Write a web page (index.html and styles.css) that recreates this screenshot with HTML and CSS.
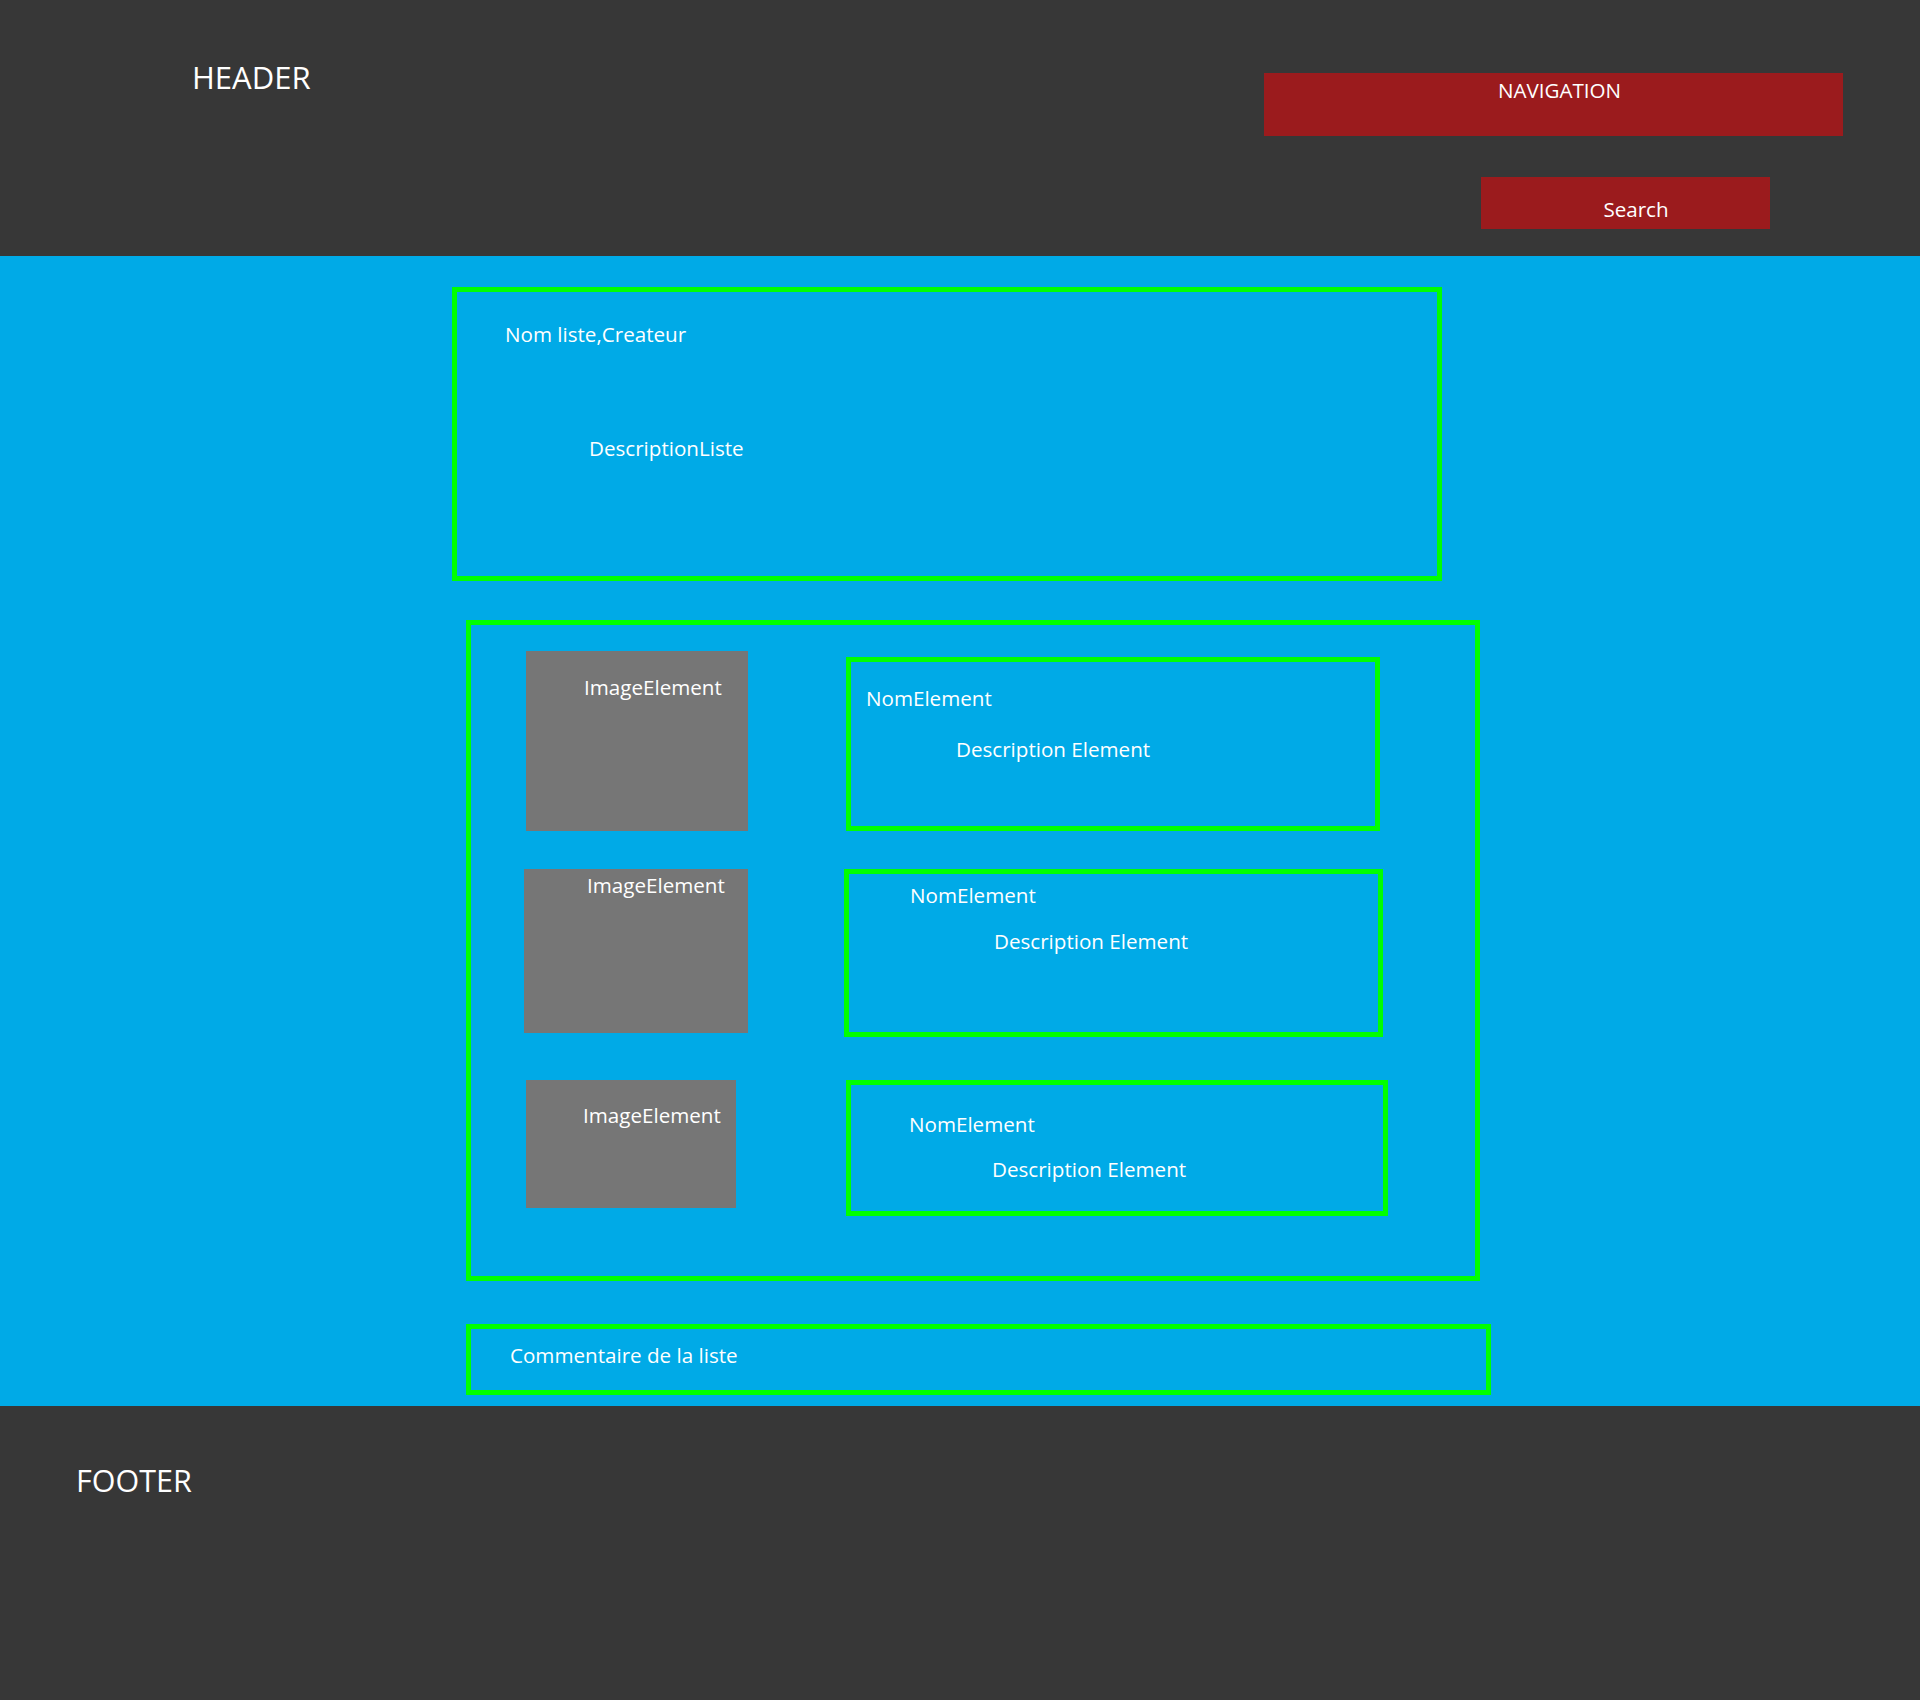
FILE: index.html
```html
<!DOCTYPE html>
<html lang="fr">
<head>
<meta charset="utf-8">
<title>Liste</title>
<link rel="stylesheet" href="styles.css">
</head>
<body>
<header class="site-header">
  <div class="site-title">HEADER</div>
  <div class="header-right">
    <nav class="nav-bar">NAVIGATION</nav>
    <div class="search-box">Search</div>
  </div>
</header>
<main class="content">
  <section class="list-info">
    <div class="list-title">Nom liste,Createur</div>
    <div class="list-desc">DescriptionListe</div>
  </section>
  <section class="elements">
    <div class="row row-1">
      <div class="image"><span class="label">ImageElement</span></div>
      <div class="elem">
        <div class="elem-name">NomElement</div>
        <div class="elem-desc">Description Element</div>
      </div>
    </div>
    <div class="row row-2">
      <div class="image"><span class="label">ImageElement</span></div>
      <div class="elem">
        <div class="elem-name">NomElement</div>
        <div class="elem-desc">Description Element</div>
      </div>
    </div>
    <div class="row row-3">
      <div class="image"><span class="label">ImageElement</span></div>
      <div class="elem">
        <div class="elem-name">NomElement</div>
        <div class="elem-desc">Description Element</div>
      </div>
    </div>
  </section>
  <section class="comments">Commentaire de la liste</section>
</main>
<footer class="site-footer">
  <div class="footer-title">FOOTER</div>
</footer>
</body>
</html>
```
FILE: styles.css
```css
* { box-sizing: border-box; }
html, body { margin: 0; padding: 0; }
body {
  font-family: "Open Sans", "Noto Sans", sans-serif;
  color: #ffffff;
  font-size: 20.6px;
  line-height: 28px;
  width: 1920px;
}

.site-header {
  height: 256px;
  background: #373737;
  display: flex;
  align-items: flex-start;
}
.site-title {
  font-size: 31px;
  line-height: 42px;
  padding-top: 56px;
  padding-left: 192px;
}
.header-right {
  margin-left: auto;
  margin-right: 77px;
  padding-top: 73px;
  width: 579px;
  display: flex;
  flex-direction: column;
}
.nav-bar {
  height: 63px;
  background: #9b1b1d;
  text-align: center;
  padding-top: 3px;
  padding-left: 12px;
}
.search-box {
  margin-top: 41px;
  margin-left: 217px;
  width: 289px;
  height: 52px;
  background: #9b1b1d;
  text-align: center;
  padding-top: 18px;
  padding-left: 21px;
}

.content {
  height: 1150px;
  background: #00aae7;
  padding-top: 31px;
  display: flex;
  flex-direction: column;
  align-items: flex-start;
}
.list-info {
  margin-left: 452px;
  width: 990px;
  height: 294px;
  border: 5px solid #00ff00;
  padding: 28px 0 0 48px;
}
.list-desc {
  margin-top: 86px;
  margin-left: 84px;
}

.elements {
  margin-top: 39px;
  margin-left: 466px;
  width: 1014px;
  height: 661px;
  border: 5px solid #00ff00;
  padding-top: 26px;
  display: flex;
  flex-direction: column;
}
.row {
  display: flex;
  align-items: flex-start;
}
.image {
  background: #767676;
}
.elem {
  border: 5px solid #00ff00;
}
.elem-desc { white-space: nowrap; }

.row-1 .image { margin-left: 55px; width: 222px; height: 180px; padding: 22px 0 0 58px; }
.row-1 .elem { margin-left: 98px; margin-top: 6px; width: 534px; height: 174px; padding: 22px 0 0 15px; }
.row-1 .elem-desc { margin-top: 23px; margin-left: 90px; }

.row-2 { margin-top: 38px; }
.row-2 .image { margin-left: 53px; width: 224px; height: 164px; padding: 2px 0 0 63px; }
.row-2 .elem { margin-left: 96px; width: 539px; height: 168px; padding: 7px 0 0 61px; }
.row-2 .elem-desc { margin-top: 18px; margin-left: 84px; }

.row-3 { margin-top: 43px; }
.row-3 .image { margin-left: 55px; width: 210px; height: 128px; padding: 21px 0 0 57px; }
.row-3 .elem { margin-left: 110px; width: 542px; height: 136px; padding: 25px 0 0 58px; }
.row-3 .elem-desc { margin-top: 17px; margin-left: 83px; }

.comments {
  margin-top: 43px;
  margin-left: 466px;
  width: 1025px;
  height: 71px;
  border: 5px solid #00ff00;
  padding: 12px 0 0 39px;
}

.site-footer {
  height: 294px;
  background: #373737;
}
.footer-title {
  font-size: 30.5px;
  line-height: 42px;
  padding-top: 53px;
  padding-left: 76px;
}
```
